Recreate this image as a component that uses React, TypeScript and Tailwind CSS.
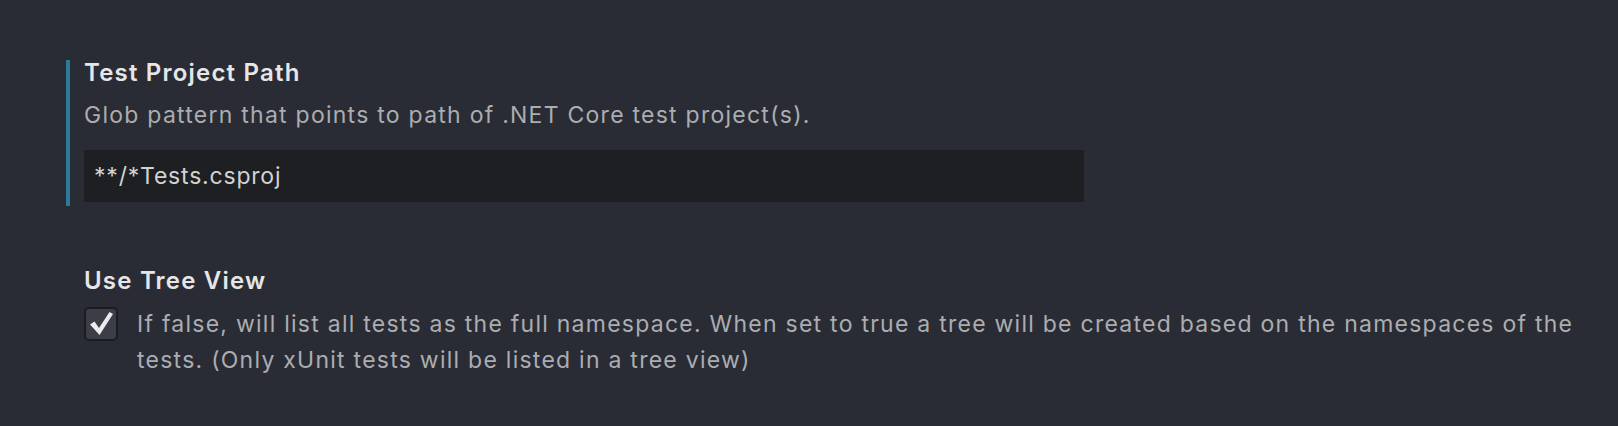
import React from "react";

export default function App() {
  const font = { fontFamily: "Inter, 'Noto Sans', sans-serif" };
  return (
    <div
      className="w-full min-h-[426px] bg-[#292c34] pt-[60px] pl-[66px] pr-[38px]"
      style={font}
    >
      <div className="border-l-4 border-[#2b7a9c] pl-[14px] pb-[4px]">
        <div className="text-[24px] leading-[26px] font-semibold tracking-[1.2px] text-[#e6e6e6]">
          Test Project Path
        </div>
        <div className="mt-[13px] text-[23px] leading-[32px] tracking-[1.25px] text-[#acadb1]">
          Glob pattern that points to path of .NET Core test project(s).
        </div>
        <div className="mt-[19px] w-[1000px] h-[52px] bg-[#1d1f23] flex items-center px-[10px] text-[23px] tracking-[0.8px] text-[#d2d2d2]">
          **/*Tests.csproj
        </div>
      </div>

      <div className="mt-[62px] border-l-4 border-transparent pl-[14px]">
        <div className="text-[24px] leading-[26px] font-semibold tracking-[1.2px] text-[#e6e6e6]">
          Use Tree View
        </div>
        <div className="mt-[12px] flex items-start gap-[19px]">
          <div className="mt-[1px] w-[34px] h-[34px] shrink-0 rounded-[5px] border-2 border-[#1b1c21] bg-[#3b3e47] flex items-center justify-center">
            <svg width="30" height="30" viewBox="0 0 30 30">
              <path
                d="M4 15.5 L8.5 12.5 L13 19 L23.5 3 L27 5 L13.5 26 Z"
                fill="#ececec"
              />
            </svg>
          </div>
          <div className="text-[23px] leading-[36px] tracking-[1.25px] text-[#acadb1]">
            If false, will list all tests as the full namespace. When set to true a tree will be created based on the namespaces of the tests. (Only xUnit tests will be listed in a tree view)
          </div>
        </div>
      </div>
    </div>
  );
}
